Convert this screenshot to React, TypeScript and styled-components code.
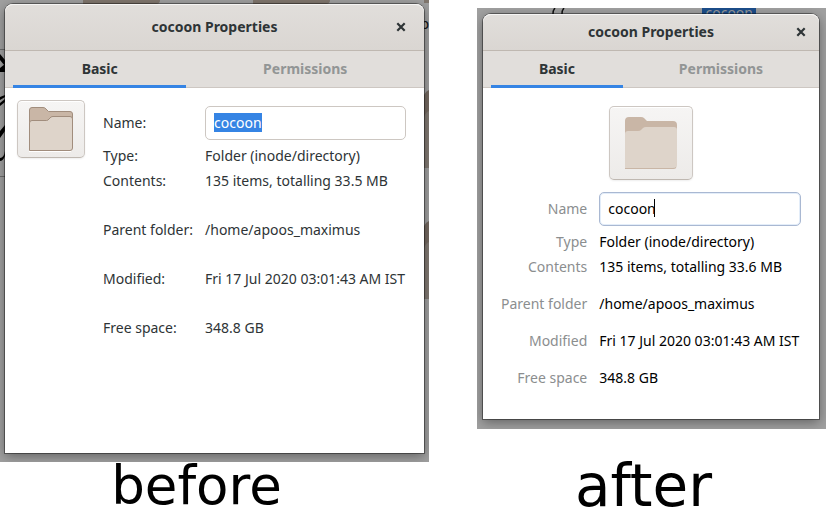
import React, { useEffect, useRef } from "react";
import styled, { createGlobalStyle, css } from "styled-components";

const GlobalStyle = createGlobalStyle`
  *, *::before, *::after { box-sizing: border-box; }
  body {
    margin: 0;
    background: #fff;
    color: #2e3436;
    font-family: "Noto Sans", "Open Sans", sans-serif;
    font-size: 14px;
    line-height: 19px;
    overflow: hidden;
  }
`;

type Variant = "before" | "after";

const Page = styled.main`
  display: grid;
  grid-template-columns: 429fr 349fr;
  column-gap: 48px;
  align-items: start;
`;

const Figure = styled.figure<{ $variant: Variant }>`
  margin: 0;
  padding-top: ${(p) => (p.$variant === "after" ? "8px" : "0")};
`;

const Caption = styled.figcaption<{ $variant: Variant }>`
  font-family: "DejaVu Sans", sans-serif;
  font-size: ${(p) => (p.$variant === "after" ? "58px" : "53px")};
  line-height: 42px;
  color: #000;
  text-align: center;
  white-space: nowrap;
  padding: ${(p) => (p.$variant === "after" ? "36px 16px 0 0" : "3px 36px 0 0")};
`;

const Backdrop = styled.div<{ $variant: Variant }>`
  position: relative;
  overflow: hidden;
  background: #a0a0a0;
  padding: ${(p) => (p.$variant === "after" ? "6px 7px 10px 6px" : "4px 5px 9px")};
`;

const Scenery = styled.svg<{ $side?: "right" }>`
  position: absolute;
  top: 0;
  ${(p) => (p.$side === "right" ? "right: 0;" : "left: 0;")}
`;

const ClippedName = styled.span<{ $place: "edge" | "top" }>`
  position: absolute;
  color: #111;
  ${(p) =>
    p.$place === "edge"
      ? css`
          right: 0;
          top: 14px;
        `
      : css`
          right: 70px;
          top: -5px;
          padding: 0 3px;
          background: #1c4e8c;
          color: #9a9a9a;
        `}
`;

const Dialog = styled.section<{ $variant: Variant }>`
  position: relative;
  min-height: ${(p) => (p.$variant === "after" ? "405px" : "449px")};
  border-radius: 8px 8px 0 0;
  background: #fff;
  box-shadow: 0 0 0 1px rgba(0, 0, 0, 0.4), 0 3px 12px rgba(0, 0, 0, 0.4);
`;

const TitleBar = styled.header<{ $variant: Variant }>`
  display: grid;
  grid-template-columns: ${(p) => (p.$variant === "after" ? "36px 1fr 36px" : "46px 1fr 46px")};
  align-items: center;
  height: ${(p) => (p.$variant === "after" ? "37px" : "47px")};
  border-radius: 8px 8px 0 0;
  border-bottom: 1px solid #bfb8b1;
  background: linear-gradient(to top, #dad6d2, #e1dedb);
  box-shadow: inset 0 1px #f6f5f4;
`;

const Title = styled.h1`
  grid-column: 2;
  margin: 0;
  padding-bottom: 2px;
  font-size: 14px;
  line-height: 19px;
  font-weight: 700;
  text-align: center;
`;

const CloseButton = styled.button`
  display: grid;
  place-items: center;
  justify-self: center;
  width: 24px;
  height: 24px;
  padding: 0;
  border: 0;
  background: none;
  color: #2e3436;
`;

const Tabs = styled.div`
  display: flex;
  gap: 8px;
  height: 37px;
  padding: 0 8px;
  background: #e1dedb;
  border-bottom: 1px solid #cdc7c2;
`;

const Tab = styled.button<{ $active?: boolean }>`
  flex: 1 1 auto;
  height: 37px;
  padding: 0 0 2px;
  border: 0;
  background: none;
  box-shadow: ${(p) => (p.$active ? "inset 0 -3px #3584e4" : "none")};
  color: ${(p) => (p.$active ? "#2e3436" : "#929595")};
  font: inherit;
  font-weight: 700;
`;

const Body = styled.div<{ $variant: Variant }>`
  display: flex;
  ${(p) =>
    p.$variant === "after"
      ? css`
          flex-direction: column;
          align-items: center;
          gap: 12px;
          padding: 18px;
        `
      : css`
          align-items: flex-start;
          gap: 18px;
          padding: 12px 18px 12px 12px;
        `}
`;

const IconButton = styled.button<{ $variant: Variant }>`
  flex: none;
  display: grid;
  place-items: center;
  width: ${(p) => (p.$variant === "after" ? "84px" : "68px")};
  height: ${(p) => (p.$variant === "after" ? "74px" : "58px")};
  padding: 0;
  border: 1px solid #cdc7c2;
  border-bottom-color: #bfb8b1;
  border-radius: 5px;
  background: linear-gradient(to top, #edebe9, #f6f5f4);
  box-shadow: inset 0 1px #fff, 0 1px 2px rgba(0, 0, 0, 0.07);
`;

const Properties = styled.dl<{ $variant: Variant }>`
  display: grid;
  grid-template-columns: auto 1fr;
  gap: 6px 12px;
  margin: 0;
  align-items: center;
  white-space: nowrap;
  ${(p) =>
    p.$variant === "after"
      ? css`
          align-self: stretch;
          dt {
            text-align: right;
            color: #8b8e8f;
          }
          dd {
            color: #000;
          }
        `
      : css`
          flex: 1;
          min-width: 0;
          margin-top: 6px;
        `}
`;

const Property = styled.div<{ $space?: number }>`
  display: contents;
  > dt,
  > dd {
    margin: ${(p) => p.$space ?? 0}px 0 0;
    min-width: 0;
  }
`;

const NameLabel = styled.label`
  display: block;
  padding-bottom: 2px;
`;

const Field = styled.div`
  position: relative;
  display: flex;
`;

const NameInput = styled.input<{ $focused?: boolean }>`
  flex: 1;
  min-width: 0;
  height: 34px;
  padding: 0 8px 2px;
  border: 1px solid ${(p) => (p.$focused ? "#a9b8d2" : "#cdc7c2")};
  border-radius: 5px;
  outline: none;
  background: #fff;
  box-shadow: ${(p) => (p.$focused ? "inset 0 0 0 1px #e3edf9" : "none")};
  color: inherit;
  font: inherit;
  line-height: 19px;
  &::selection {
    background: #3584e4;
    color: #fff;
  }
`;

const Caret = styled.span`
  position: absolute;
  top: 7px;
  left: 55px;
  width: 1px;
  height: 18px;
  background: #000;
`;

const CloseIcon = () => (
  <svg width="10" height="10" viewBox="0 0 10 10" aria-hidden="true">
    <path d="M1.3 1.3 8.7 8.7M8.7 1.3 1.3 8.7" stroke="currentColor" strokeWidth="2.2" />
  </svg>
);

const OutlinedFolder = () => (
  <svg width="46" height="46" viewBox="0 0 46 46" aria-hidden="true">
    <path d="M1.5 44V4Q1.5 1.5 4 1.5H15Q17 1.5 18 3L20.5 5.5H42Q44.5 5.5 44.5 8V20H1.5Z" fill="#c9b6a6" stroke="#a18d7d" />
    <path d="M1.5 44.5V17Q1.5 14.5 4 14.5H18.5Q20 14.5 21 13L23 11Q24 10.5 25 10.5H42Q44.5 10.5 44.5 13V42Q44.5 44.5 42 44.5Z" fill="#ded4ca" stroke="#a18d7d" />
    <path d="M1 45.5H43" stroke="#fff" />
  </svg>
);

const FlatFolder = () => (
  <svg width="54" height="54" viewBox="0 0 54 54" aria-hidden="true">
    <path d="M1 48V5Q1 1 5 1H17Q19 1 20 2L23 5H49Q53 5 53 9V20H1Z" fill="#c9b6a6" />
    <path d="M1 53V18Q1 15 4 15H14Q16 15 17 14L19 12Q20 11 22 11H50Q53 11 53 14V49Q53 53 49 53Z" fill="#ded4ca" />
    <path d="M1 52.5H49Q51 52.5 52 51.5" stroke="#c9b6a6" fill="none" />
  </svg>
);

const BeforeScenery = () => (
  <>
    <Scenery width="340" height="200" viewBox="0 0 340 200" aria-hidden="true">
      <path d="M83 0H160Q160 4 156 4H83ZM253 0H330Q330 4 326 4H253Z" fill="#81776e" />
      <path d="M0 49.5H5M0 176.5H5" stroke="#6c6c6c" />
      <path d="M0 54 5 60V66L0 60ZM0 68 5 64V72L0 72ZM0 97 5 95V97L0 100ZM0 103 5 99V102L0 106ZM0 131 5 125V131L0 138ZM0 158Q4 158 5 151V156Q3 161 0 161Z" fill="#000" />
    </Scenery>
    <Scenery $side="right" width="5" height="310" viewBox="0 0 5 310" aria-hidden="true">
      <path d="M0 0H5V3H0Z" fill="#81776e" />
      <path d="M0 95Q2 91 5 90V168H0ZM0 226Q2 222 5 221V299H0Z" fill="#756a61" />
      <path d="M0 117Q2 112 5 111V168H0ZM0 248Q2 243 5 242V299H0Z" fill="#827a73" />
    </Scenery>
    <ClippedName $place="edge">p</ClippedName>
  </>
);

const AfterScenery = () => (
  <>
    <Scenery width="100" height="6" viewBox="0 0 100 6" aria-hidden="true">
      <path d="M78 0Q76 2 76 6M87 0Q85 2 85 6" stroke="#111" strokeWidth="1.5" fill="none" />
    </Scenery>
    <ClippedName $place="top">cocoon</ClippedName>
  </>
);

interface Entry {
  label: string;
  value: string;
  separate?: boolean;
}

interface PropertiesDialogProps {
  variant: Variant;
  entries: Entry[];
}

function PropertiesDialog({ variant, entries }: PropertiesDialogProps) {
  const input = useRef<HTMLInputElement>(null);
  const before = variant === "before";
  const suffix = before ? ":" : "";
  const fieldId = `name-${variant}`;

  useEffect(() => {
    if (before) {
      input.current?.focus();
      input.current?.select();
    }
  }, [before]);

  return (
    <Dialog $variant={variant} aria-labelledby={`title-${variant}`}>
      <TitleBar $variant={variant}>
        <Title id={`title-${variant}`}>cocoon Properties</Title>
        <CloseButton type="button" aria-label="Close">
          <CloseIcon />
        </CloseButton>
      </TitleBar>
      <Tabs role="tablist">
        <Tab type="button" role="tab" aria-selected="true" $active>
          Basic
        </Tab>
        <Tab type="button" role="tab" aria-selected="false">
          Permissions
        </Tab>
      </Tabs>
      <Body $variant={variant}>
        <IconButton type="button" aria-label="Folder icon" $variant={variant}>
          {before ? <OutlinedFolder /> : <FlatFolder />}
        </IconButton>
        <Properties $variant={variant}>
          <Property>
            <dt>
              <NameLabel htmlFor={fieldId}>Name{suffix}</NameLabel>
            </dt>
            <dd>
              <Field>
                <NameInput ref={input} id={fieldId} type="text" defaultValue="cocoon" $focused={!before} />
                {!before && <Caret />}
              </Field>
            </dd>
          </Property>
          {entries.map((entry) => (
            <Property key={entry.label} $space={entry.separate ? (before ? 24 : 12) : 0}>
              <dt>
                {entry.label}
                {suffix}
              </dt>
              <dd>{entry.value}</dd>
            </Property>
          ))}
        </Properties>
      </Body>
    </Dialog>
  );
}

const entriesWithSize = (size: string): Entry[] => [
  { label: "Type", value: "Folder (inode/directory)" },
  { label: "Contents", value: `135 items, totalling ${size}` },
  { label: "Parent folder", value: "/home/apoos_maximus", separate: true },
  { label: "Modified", value: "Fri 17 Jul 2020 03:01:43 AM IST", separate: true },
  { label: "Free space", value: "348.8 GB", separate: true },
];

export default function App() {
  return (
    <>
      <GlobalStyle />
      <Page>
        <Figure $variant="before">
          <Backdrop $variant="before">
            <BeforeScenery />
            <PropertiesDialog variant="before" entries={entriesWithSize("33.5 MB")} />
          </Backdrop>
          <Caption $variant="before">before</Caption>
        </Figure>
        <Figure $variant="after">
          <Backdrop $variant="after">
            <AfterScenery />
            <PropertiesDialog variant="after" entries={entriesWithSize("33.6 MB")} />
          </Backdrop>
          <Caption $variant="after">after</Caption>
        </Figure>
      </Page>
    </>
  );
}
